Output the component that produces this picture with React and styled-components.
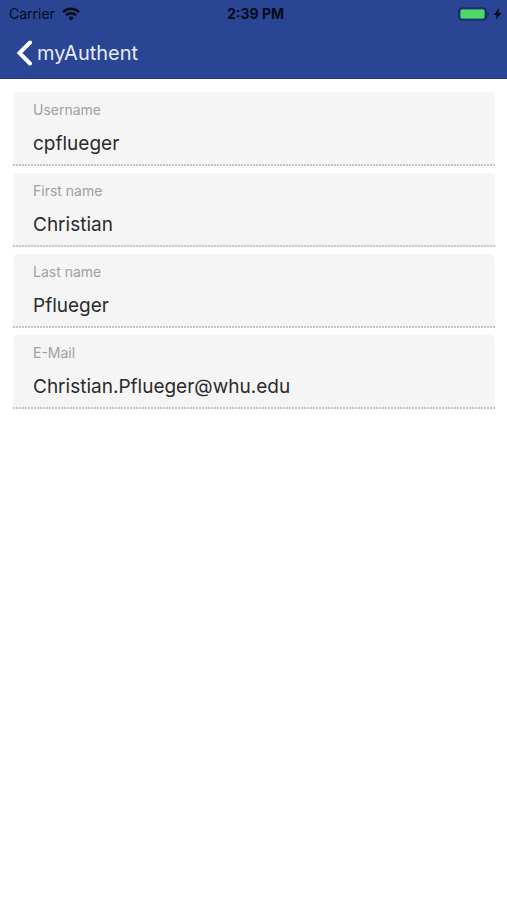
import React from 'react';
import styled, { createGlobalStyle } from 'styled-components';

const GlobalStyle = createGlobalStyle`
  * {
    box-sizing: border-box;
  }
  body {
    margin: 0;
    background-color: #ffffff;
    font-family: Inter, "Liberation Sans", sans-serif;
  }
`;

const Header = styled.header`
  background-color: #2a4593;
  border-bottom: 1px solid #223c8a;
`;

const StatusBar = styled.div`
  display: grid;
  grid-template-columns: 1fr auto 1fr;
  align-items: center;
  height: 27px;
  padding: 0 5px 0 9px;
  color: #060a1c;
  font-size: 14px;
  line-height: 20px;
`;

const StatusGroup = styled.div`
  display: flex;
  align-items: center;
  justify-content: ${({ $end }) => ($end ? 'flex-end' : 'flex-start')};
  gap: ${({ $end }) => ($end ? '3px' : '7px')};
`;

const Clock = styled.time`
  font-weight: 700;
`;

const NavBar = styled.nav`
  display: flex;
  align-items: center;
  height: 51px;
  padding: 0 15px;
`;

const BackButton = styled.button`
  display: flex;
  align-items: center;
  gap: 5px;
  padding: 0;
  border: none;
  background: none;
  color: #ffffff;
  font-family: inherit;
  font-size: 20px;
  line-height: 28px;
  cursor: pointer;
`;

const BackLabel = styled.span`
  color: #e6ecfb;
`;

const ProfileForm = styled.form`
  display: flex;
  flex-direction: column;
  gap: 7px;
  padding: 13px 12px 13px 13px;
`;

const Field = styled.div`
  display: flex;
  flex-direction: column;
  height: 74px;
  padding: 8px 20px 0;
  border-radius: 5px 5px 0 0;
  background:
    repeating-linear-gradient(to right, #c6c6c6 0 2px, #f5f5f5 2px 3px) left bottom / 100% 2px no-repeat,
    #f5f5f5;
`;

const Label = styled.label`
  color: #a0a0a0;
  font-size: 14px;
  line-height: 20px;
`;

const Input = styled.input`
  width: 100%;
  height: 28px;
  margin-top: 10px;
  padding: 0;
  border: none;
  outline: none;
  background: transparent;
  color: #2b2b2b;
  font-family: inherit;
  font-size: 19px;
  line-height: 28px;
`;

const fields = [
  { name: 'username', label: 'Username', type: 'text', value: 'cpflueger' },
  { name: 'firstName', label: 'First name', type: 'text', value: 'Christian' },
  { name: 'lastName', label: 'Last name', type: 'text', value: 'Pflueger' },
  { name: 'email', label: 'E-Mail', type: 'email', value: 'Christian.Pflueger@whu.edu' },
];

function WifiIcon() {
  return (
    <svg width="18" height="14" viewBox="0 0 18 14" fill="none" stroke="currentColor" strokeWidth="2.5" aria-hidden="true">
      <path d="M1 5.1C5.6 .7 12.4 .7 17 5.1" />
      <path d="M4 8.2C6.8 5.5 11.2 5.5 14 8.2" />
      <path d="M9 13.4 6.3 10.6C7.8 9.2 10.2 9.2 11.7 10.6Z" fill="currentColor" stroke="none" />
    </svg>
  );
}

function BatteryIcon() {
  return (
    <svg width="32" height="14" viewBox="0 0 32 14" aria-hidden="true">
      <rect x="1" y="1" width="27" height="12" rx="3" fill="#2a4593" stroke="#14224f" strokeWidth="1.2" />
      <rect x="2.5" y="2.5" width="24" height="9" rx="1.6" fill="#4cd964" />
      <path d="M29.5 5C31.3 5.5 31.3 8.5 29.5 9Z" fill="#14224f" />
    </svg>
  );
}

function BoltIcon() {
  return (
    <svg width="9" height="12" viewBox="0 0 9 12" fill="currentColor" aria-hidden="true">
      <path d="M6.2 0 .6 6.9H3.8L2.6 12 8.6 4.8H5.2Z" />
    </svg>
  );
}

function ChevronIcon() {
  return (
    <svg width="17" height="28" viewBox="0 0 17 28" fill="none" stroke="currentColor" strokeWidth="4" strokeLinecap="round" strokeLinejoin="miter" aria-hidden="true">
      <path d="M15 3.5 4.5 14 15 24.5" />
    </svg>
  );
}

function App() {
  return (
    <>
      <GlobalStyle />
      <Header>
        <StatusBar>
          <StatusGroup>
            <span>Carrier</span>
            <WifiIcon />
          </StatusGroup>
          <Clock>2:39 PM</Clock>
          <StatusGroup $end>
            <BatteryIcon />
            <BoltIcon />
          </StatusGroup>
        </StatusBar>
        <NavBar>
          <BackButton type="button">
            <ChevronIcon />
            <BackLabel>myAuthent</BackLabel>
          </BackButton>
        </NavBar>
      </Header>
      <main>
        <ProfileForm>
          {fields.map((field) => (
            <Field key={field.name}>
              <Label htmlFor={field.name}>{field.label}</Label>
              <Input id={field.name} name={field.name} type={field.type} defaultValue={field.value} readOnly />
            </Field>
          ))}
        </ProfileForm>
      </main>
    </>
  );
}

export default App;
